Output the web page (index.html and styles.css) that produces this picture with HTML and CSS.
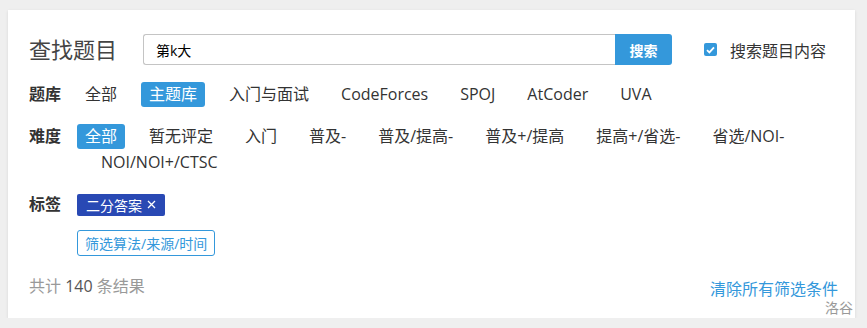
FILE: index.html
```html
<!DOCTYPE html>
<html lang="zh-CN">
<head>
  <meta charset="UTF-8" />
  <meta name="viewport" content="width=device-width, initial-scale=1.0" />
  <title>查找题目</title>
  <link rel="stylesheet" href="styles.css">
</head>
<body>
  <div class="card">
    <div class="search-row">
      <h2 class="title">查找题目</h2>
      <div class="search-box">
        <input type="text" class="search-input" value="第k大" />
        <button class="search-btn">搜索</button>
      </div>
      <label class="check">
        <span class="check-box">
          <svg width="9" height="8" viewBox="0 0 9 8"><path d="M1 4.2 L3.4 6.4 L8 1.4" fill="none" stroke="#fff" stroke-width="1.8"/></svg>
        </span>
        搜索题目内容
      </label>
    </div>

    <div class="filter-row">
      <span class="filter-label">题库</span>
      <div class="options">
        <span class="opt">全部</span>
        <span class="opt active">主题库</span>
        <span class="opt">入门与面试</span>
        <span class="opt">CodeForces</span>
        <span class="opt">SPOJ</span>
        <span class="opt">AtCoder</span>
        <span class="opt">UVA</span>
      </div>
    </div>

    <div class="filter-row">
      <span class="filter-label">难度</span>
      <div class="options">
        <span class="opt active">全部</span>
        <span class="opt">暂无评定</span>
        <span class="opt">入门</span>
        <span class="opt">普及-</span>
        <span class="opt">普及/提高-</span>
        <span class="opt">普及+/提高</span>
        <span class="opt">提高+/省选-</span>
        <span class="opt">省选/NOI-</span>
        <span class="opt">NOI/NOI+/CTSC</span>
      </div>
    </div>

    <div class="filter-row">
      <span class="filter-label">标签</span>
      <div class="tag-area">
        <div class="tag-line">
          <span class="tag">二分答案
            <svg class="tag-x" width="9" height="9" viewBox="0 0 9 9"><path d="M1 1 L8 8 M8 1 L1 8" stroke="#fff" stroke-width="1.3"/></svg>
          </span>
        </div>
        <button class="outline-btn">筛选算法/来源/时间</button>
      </div>
    </div>

    <div class="result-row">
      <span class="count">共计 <b>140</b> 条结果</span>
      <a class="clear" href="#">清除所有筛选条件</a>
    </div>

    <span class="mark">洛谷</span>
  </div>
</body>
</html>
```

FILE: styles.css
```css
body { margin: 0; background: #efefef; font-family: "Open Sans", "Noto Sans CJK SC", sans-serif; color: #333; }
.card { position: relative; box-sizing: border-box; width: 847px; margin: 10px 0 0 8px; padding: 24px 20px 19px 21px; background: #fff; box-shadow: 0 1px 3px rgba(0,0,0,0.1); }

.search-row { display: flex; align-items: center; height: 31px; margin-bottom: 17px; }
.title { margin: 0 26px 0 0; font-size: 22px; font-weight: normal; color: #444; line-height: 31px; }
.search-box { display: flex; width: 529px; height: 31px; }
.search-input { flex: 1; box-sizing: border-box; height: 31px; padding: 0 12px; border: 1px solid #c4c4c4; border-right: none; border-radius: 3px 0 0 3px; font: 14px "Open Sans", "Noto Sans CJK SC", sans-serif; color: #000; outline: none; }
.search-btn { width: 57px; height: 31px; border: none; border-radius: 0 3px 3px 0; background: #3498db; color: #fff; font: bold 14px "Open Sans", "Noto Sans CJK SC", sans-serif; }
.check { display: flex; align-items: center; margin-left: 32px; font-size: 16px; color: #333; }
.check-box { display: flex; align-items: center; justify-content: center; width: 13px; height: 13px; margin-right: 13px; border-radius: 2px; background: #3498db; }

.filter-row { display: flex; align-items: flex-start; margin-bottom: 17px; font-size: 16px; }
.filter-label { width: 32px; margin-right: 16px; font-weight: bold; line-height: 25px; color: #333; }
.options { display: flex; flex-wrap: wrap; flex: 1; row-gap: 1px; column-gap: 16px; padding-left: 16px; }
.options .opt:first-child { margin-left: -16px; }
.opt { padding: 0 8px; line-height: 25px; border-radius: 3px; color: #333; white-space: nowrap; }
.opt.active { background: #3498db; color: #fff; }

.tag-area { display: flex; flex-direction: column; align-items: flex-start; }
.tag-line { display: flex; align-items: center; height: 25px; margin-bottom: 13px; }
.tag { display: flex; align-items: center; gap: 5px; height: 22px; padding: 0 9px; border-radius: 2px; background: #2949b4; color: #fff; font-size: 14px; }
.outline-btn { height: 26px; padding: 0 7px; border: 1px solid #3498db; border-radius: 3px; background: #fff; color: #3498db; font: 14px "Open Sans", "Noto Sans CJK SC", sans-serif; }

.result-row { display: flex; justify-content: space-between; align-items: flex-start; height: 26px; font-size: 16px; }
.count { line-height: 26px; color: #999; }
.count b { font-weight: normal; color: #555; }
.clear { margin-top: 3px; margin-right: -3px; line-height: 26px; color: #3498db; text-decoration: none; }
.mark { position: absolute; right: 2px; bottom: 1px; font-size: 14px; color: #999; }
```
